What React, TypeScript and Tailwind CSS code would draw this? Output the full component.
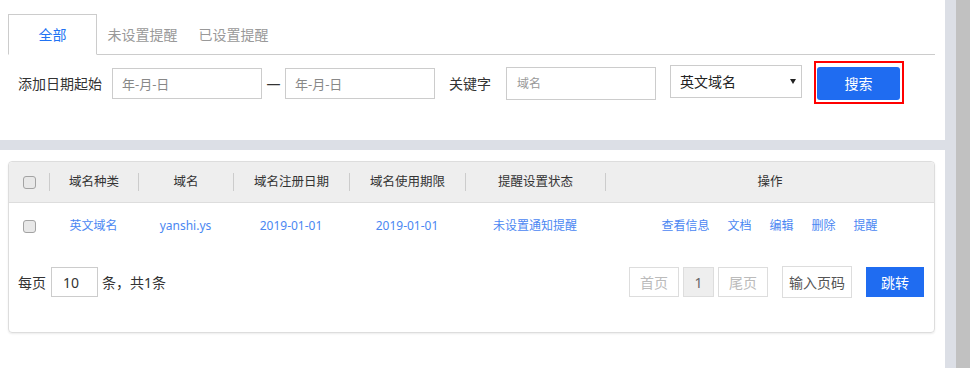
import React from "react";

const links = ["查看信息", "文档", "编辑", "删除", "提醒"];

// 表头列宽，分隔线画在每列左侧
const cols = [
  { label: "域名种类", w: "w-[89px]" },
  { label: "域名", w: "w-[95px]" },
  { label: "域名注册日期", w: "w-[116px]" },
  { label: "域名使用期限", w: "w-[116px]" },
  { label: "提醒设置状态", w: "w-[140px]" },
  { label: "操作", w: "flex-1" },
];

const row = ["英文域名", "yanshi.ys", "2019-01-01", "2019-01-01", "未设置通知提醒"];

function Checkbox() {
  return <div className="w-[13px] h-[13px] rounded-[3px] border border-[#a3a3a3] bg-[#e8e8e8]" />;
}

export default function App() {
  return (
    <div className="flex w-[970px] h-[368px] overflow-hidden bg-[#dcdfe6] text-[#333] font-['Noto_Sans','Noto_Sans_CJK_SC',sans-serif]">
      <div className="flex flex-col w-[945px]">
        {/* 顶部：标签页 + 搜索条件 */}
        <div className="h-[140px] bg-white pt-[14px] pl-[8px] pr-[10px]">
          <div className="flex border-b border-[#ccc] text-[14px]">
            <div className="w-[89px] h-[41px] -mb-px flex items-center justify-center border border-[#ccc] border-b-white bg-white text-[#2173f3]">
              全部
            </div>
            <div className="px-[10.5px] flex items-center text-[#999]">未设置提醒</div>
            <div className="px-[10.5px] flex items-center text-[#999]">已设置提醒</div>
          </div>

          <div className="flex items-start pl-[10px] mt-[6px] text-[14px]">
            <span className="mt-[7px] leading-[31px]">添加日期起始</span>
            <input
              readOnly
              placeholder="年-月-日"
              className="ml-[10px] mt-[7px] w-[150px] h-[31px] border border-[#ccc] px-[9px] text-[13px] outline-none placeholder:text-[#888]"
            />
            <span className="mt-[7px] w-[23px] text-center leading-[31px]">—</span>
            <input
              readOnly
              placeholder="年-月-日"
              className="mt-[7px] w-[150px] h-[31px] border border-[#ccc] px-[9px] text-[13px] outline-none placeholder:text-[#888]"
            />
            <span className="ml-[14px] mt-[7px] leading-[31px]">关键字</span>
            <input
              readOnly
              placeholder="域名"
              className="ml-[15px] mt-[6px] w-[150px] h-[33px] border border-[#ccc] px-[10px] text-[12px] outline-none placeholder:text-[#999]"
            />
            <div className="ml-[14px] mt-[4px] w-[132px] h-[33px] border border-[#ccc] flex items-center justify-between pl-[9px] pr-[5px] text-[#222]">
              <span>英文域名</span>
              <svg width="6" height="5" viewBox="0 0 6 5">
                <path d="M0 0h6L3 5z" fill="#222" />
              </svg>
            </div>
            <div className="ml-[12px] w-[90px] h-[43px] border-2 border-[#f00] pl-[1px] pt-[4px]">
              <button className="w-[83px] h-[33px] rounded-[3px] bg-[#1f6cf1] text-white text-[14px]">搜索</button>
            </div>
          </div>
        </div>

        {/* 列表 */}
        <div className="mt-[10px] flex-1 bg-white pt-[11px] pl-[8px] pr-[10px]">
          <div className="border border-[#ddd] rounded-[4px] shadow-[0_1px_2px_rgba(0,0,0,0.08)]">
            <div className="flex h-[41px] bg-[#eee] border-b border-[#ddd] rounded-t-[4px] text-[12.5px]">
              <div className="w-[40px] flex items-center justify-center">
                <Checkbox />
              </div>
              {cols.map((c) => (
                <div key={c.label} className={`${c.w} flex items-center`}>
                  <span className="w-px h-[18px] bg-[#ccc]" />
                  <span className="flex-1 text-center">{c.label}</span>
                </div>
              ))}
            </div>

            <div className="flex h-[46px] text-[12px] text-[#4b87f2]">
              <div className="w-[40px] flex items-center justify-center">
                <Checkbox />
              </div>
              {row.map((t, i) => (
                <div key={i} className={`${cols[i].w} flex items-center justify-center`}>
                  {t}
                </div>
              ))}
              <div className="flex-1 flex items-center justify-center gap-[18px]">
                {links.map((l) => (
                  <span key={l}>{l}</span>
                ))}
              </div>
            </div>

            {/* 分页 */}
            <div className="flex items-center justify-between pl-[9px] pr-[10px] pt-[17px] pb-[34px] text-[14px]">
              <div className="flex items-center">
                <span>每页</span>
                <div className="ml-[5px] w-[47px] h-[30px] border border-[#ccc] pl-[11px] flex items-center">10</div>
                <span className="ml-[4px]">条，共1条</span>
              </div>
              <div className="flex items-center">
                <div className="w-[50px] h-[30px] border border-[#ddd] flex items-center justify-center text-[#bbb]">首页</div>
                <div className="ml-[4px] w-[31px] h-[30px] border border-[#ddd] bg-[#eee] flex items-center justify-center text-[#666]">1</div>
                <div className="ml-[4px] w-[50px] h-[30px] border border-[#ddd] flex items-center justify-center text-[#bbb]">尾页</div>
                <div className="ml-[14px] w-[70px] h-[32px] border border-[#ddd] flex items-center justify-center text-[#555]">输入页码</div>
                <button className="ml-[14px] w-[58px] h-[30px] bg-[#1f6cf1] text-white">跳转</button>
              </div>
            </div>
          </div>
        </div>
      </div>
      <div className="w-[11px]" />
      <div className="w-[14px] bg-[#c1c1c1]" />
    </div>
  );
}
